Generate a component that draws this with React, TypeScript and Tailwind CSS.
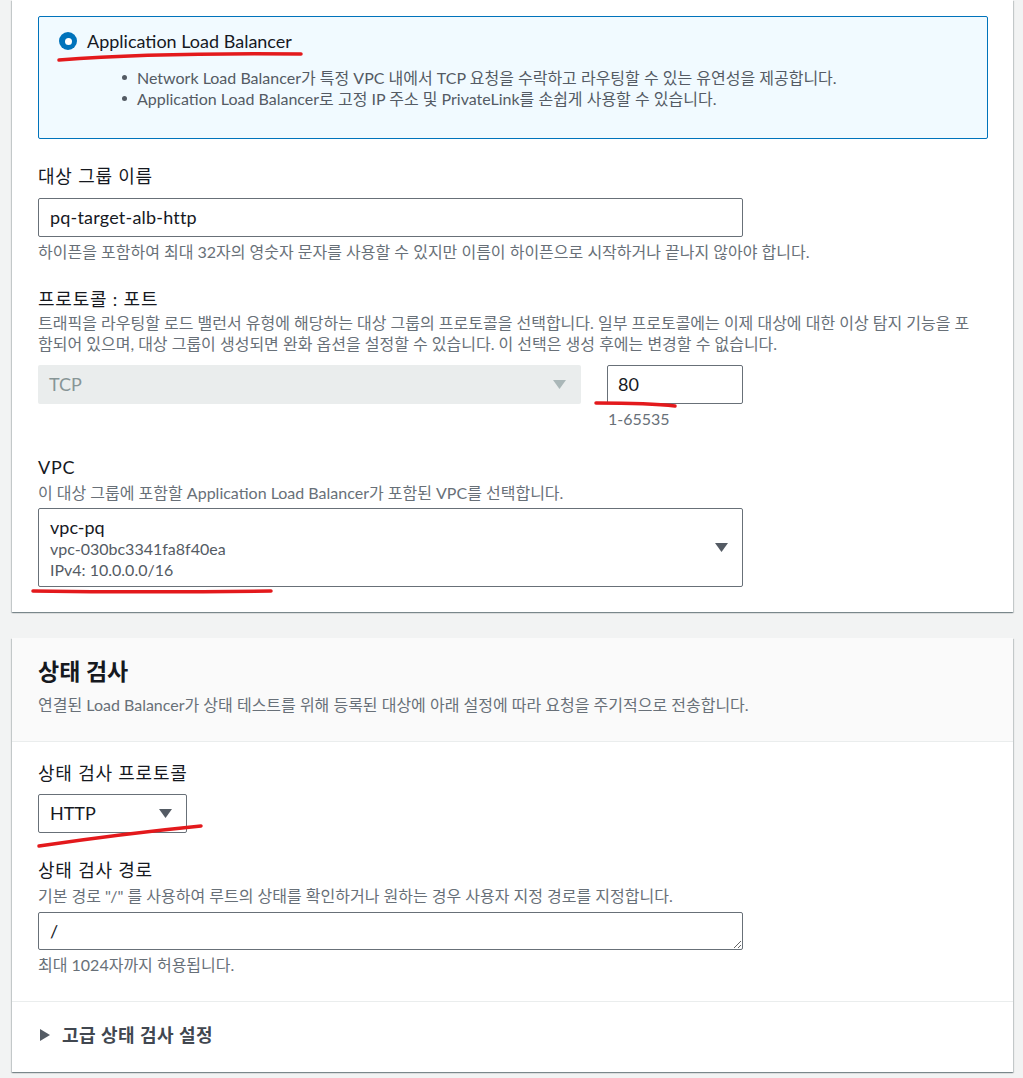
import React from "react";

const font = { fontFamily: 'Lato, "Noto Sans CJK KR", sans-serif' };

function Caret({ color = "#545b64" }: { color?: string }) {
  return (
    <svg width="13" height="9" viewBox="0 0 13 9">
      <path d="M0 0 H13 L6.5 9 Z" fill={color} />
    </svg>
  );
}

function Label({ children, className = "" }: { children: React.ReactNode; className?: string }) {
  return <div className={`text-[18px] leading-[22px] tracking-[0.8px] text-[#16191f] ${className}`}>{children}</div>;
}

function Desc({ children, className = "" }: { children: React.ReactNode; className?: string }) {
  return <div className={`text-[16px] leading-[20px] text-[#687078] ${className}`}>{children}</div>;
}

export default function App() {
  return (
    <div className="relative min-h-[1078px] bg-[#f2f3f3] pb-2 text-[#16191f]" style={font}>
      {/* target group card */}
      <section className="ml-3 w-[1001px] bg-white px-[26px] pt-4 pb-[25px] shadow-[0_1px_1px_0_rgba(0,28,36,0.3),1px_1px_1px_0_rgba(0,28,36,0.15),-1px_1px_1px_0_rgba(0,28,36,0.15)]">
        <div className="h-[123px] w-[950px] rounded-[2px] border border-[#0073bb] bg-[#f1faff] px-5 pt-[13px]">
          <div className="flex items-center gap-[10px]">
            <span className="flex h-[18px] w-[18px] items-center justify-center rounded-full bg-[#0073bb]">
              <span className="h-[7px] w-[7px] rounded-full bg-white" />
            </span>
            <span className="text-[18px] leading-[22px]">Application Load Balancer</span>
          </div>
          <ul className="mt-[15px] pl-[78px] text-[16px] leading-[21px] text-[#545b64]">
            <li className="relative before:absolute before:left-[-15px] before:top-[8px] before:h-[5px] before:w-[5px] before:rounded-full before:bg-[#545b64]">
              Network Load Balancer가 특정 VPC 내에서 TCP 요청을 수락하고 라우팅할 수 있는 유연성을 제공합니다.
            </li>
            <li className="relative before:absolute before:left-[-15px] before:top-[8px] before:h-[5px] before:w-[5px] before:rounded-full before:bg-[#545b64]">
              Application Load Balancer로 고정 IP 주소 및 PrivateLink를 손쉽게 사용할 수 있습니다.
            </li>
          </ul>
        </div>

        <Label className="mt-[26px]">대상 그룹 이름</Label>
        <div className="mt-[11px] flex h-[39px] w-[705px] items-center rounded-[2px] border border-[#687078] px-[11px] text-[18px] tracking-[0.2px]">
          pq-target-alb-http
        </div>
        <Desc className="mt-[5px]">하이픈을 포함하여 최대 32자의 영숫자 문자를 사용할 수 있지만 이름이 하이픈으로 시작하거나 끝나지 않아야 합니다.</Desc>

        <Label className="mt-[26px]">프로토콜 : 포트</Label>
        <Desc className="mt-[2px] w-[950px] leading-[21px]">
          트래픽을 라우팅할 로드 밸런서 유형에 해당하는 대상 그룹의 프로토콜을 선택합니다. 일부 프로토콜에는 이제 대상에 대한 이상 탐지 기능을 포
          <br />
          함되어 있으며, 대상 그룹이 생성되면 완화 옵션을 설정할 수 있습니다. 이 선택은 생성 후에는 변경할 수 없습니다.
        </Desc>
        <div className="mt-[11px] flex gap-[26px]">
          <div className="flex h-[39px] w-[543px] items-center justify-between rounded-[2px] bg-[#eaeded] pl-[11px] pr-[15px] text-[18px] text-[#879596]">
            <span>TCP</span>
            <Caret color="#aab7b8" />
          </div>
          <div>
            <div className="flex h-[39px] w-[136px] items-center rounded-[2px] border border-[#687078] px-[10px] text-[18px]">80</div>
            <Desc className="mt-[5px] pl-px">1-65535</Desc>
          </div>
        </div>

        <Label className="mt-[27px]">VPC</Label>
        <Desc className="mt-[5px]">이 대상 그룹에 포함할 Application Load Balancer가 포함된 VPC를 선택합니다.</Desc>
        <div className="mt-[5px] flex h-[79px] w-[705px] items-center justify-between rounded-[2px] border border-[#687078] pl-[11px] pr-[14px]">
          <div className="pt-px">
            <div className="text-[18px] leading-[22px]">vpc-pq</div>
            <div className="text-[16px] leading-[21px] text-[#545b64]">vpc-030bc3341fa8f40ea</div>
            <div className="text-[16px] leading-[21px] text-[#545b64]">IPv4: 10.0.0.0/16</div>
          </div>
          <Caret />
        </div>
      </section>

      {/* health check card */}
      <section className="ml-3 mt-[26px] w-[1001px] bg-white shadow-[0_1px_1px_0_rgba(0,28,36,0.3),1px_1px_1px_0_rgba(0,28,36,0.15),-1px_1px_1px_0_rgba(0,28,36,0.15)]">
        <div className="border-b border-[#eaeded] bg-[#fafafa] px-[26px] pt-[19px] pb-[26px]">
          <h2 className="text-[23px] font-bold leading-[28px]">상태 검사</h2>
          <Desc className="mt-[10px] text-[#545b64]">연결된 Load Balancer가 상태 테스트를 위해 등록된 대상에 아래 설정에 따라 요청을 주기적으로 전송합니다.</Desc>
        </div>
        <div className="border-b border-[#eaeded] px-[26px] pt-[20px] pb-[26px]">
          <Label>상태 검사 프로토콜</Label>
          <div className="mt-[10px] flex h-[39px] w-[149px] items-center justify-between rounded-[2px] border border-[#687078] pl-[11px] pr-[14px] text-[18px]">
            <span>HTTP</span>
            <Caret />
          </div>
          <Label className="mt-[26px]">상태 검사 경로</Label>
          <Desc className="mt-[5px]">기본 경로 "/" 를 사용하여 루트의 상태를 확인하거나 원하는 경우 사용자 지정 경로를 지정합니다.</Desc>
          <textarea
            readOnly
            value="/"
            rows={1}
            className="mt-[6px] block h-[38px] w-[705px] rounded-[2px] border border-[#687078] px-[11px] py-[7px] text-[18px] leading-[22px] text-[#16191f] outline-none"
            style={font}
          />
          <Desc className="mt-[5px]">최대 1024자까지 허용됩니다.</Desc>
        </div>
        <div className="flex h-[70px] items-center gap-[12px] pl-[28px] pb-[4px]">
          <svg width="10" height="12" viewBox="0 0 10 12">
            <path d="M0 0 L10 6 L0 12 Z" fill="#545b64" />
          </svg>
          <span className="text-[18px] font-bold leading-[22px] tracking-[0.5px] text-[#414750]">고급 상태 검사 설정</span>
        </div>
      </section>

      {/* red hand-drawn annotations */}
      <svg className="pointer-events-none absolute left-0 top-0" width="1023" height="1078" viewBox="0 0 1023 1078">
        <g fill="none" stroke="#e3191c" strokeWidth="3.5" strokeLinecap="round">
          <path d="M59 60 C110 56 200 53 301 54" />
          <path d="M596 403 C620 403 650 403 675 406" />
          <path d="M33 591 C100 592 200 592 271 591" />
          <path d="M39 846 C80 840 140 832 201 826" />
        </g>
      </svg>
    </div>
  );
}
